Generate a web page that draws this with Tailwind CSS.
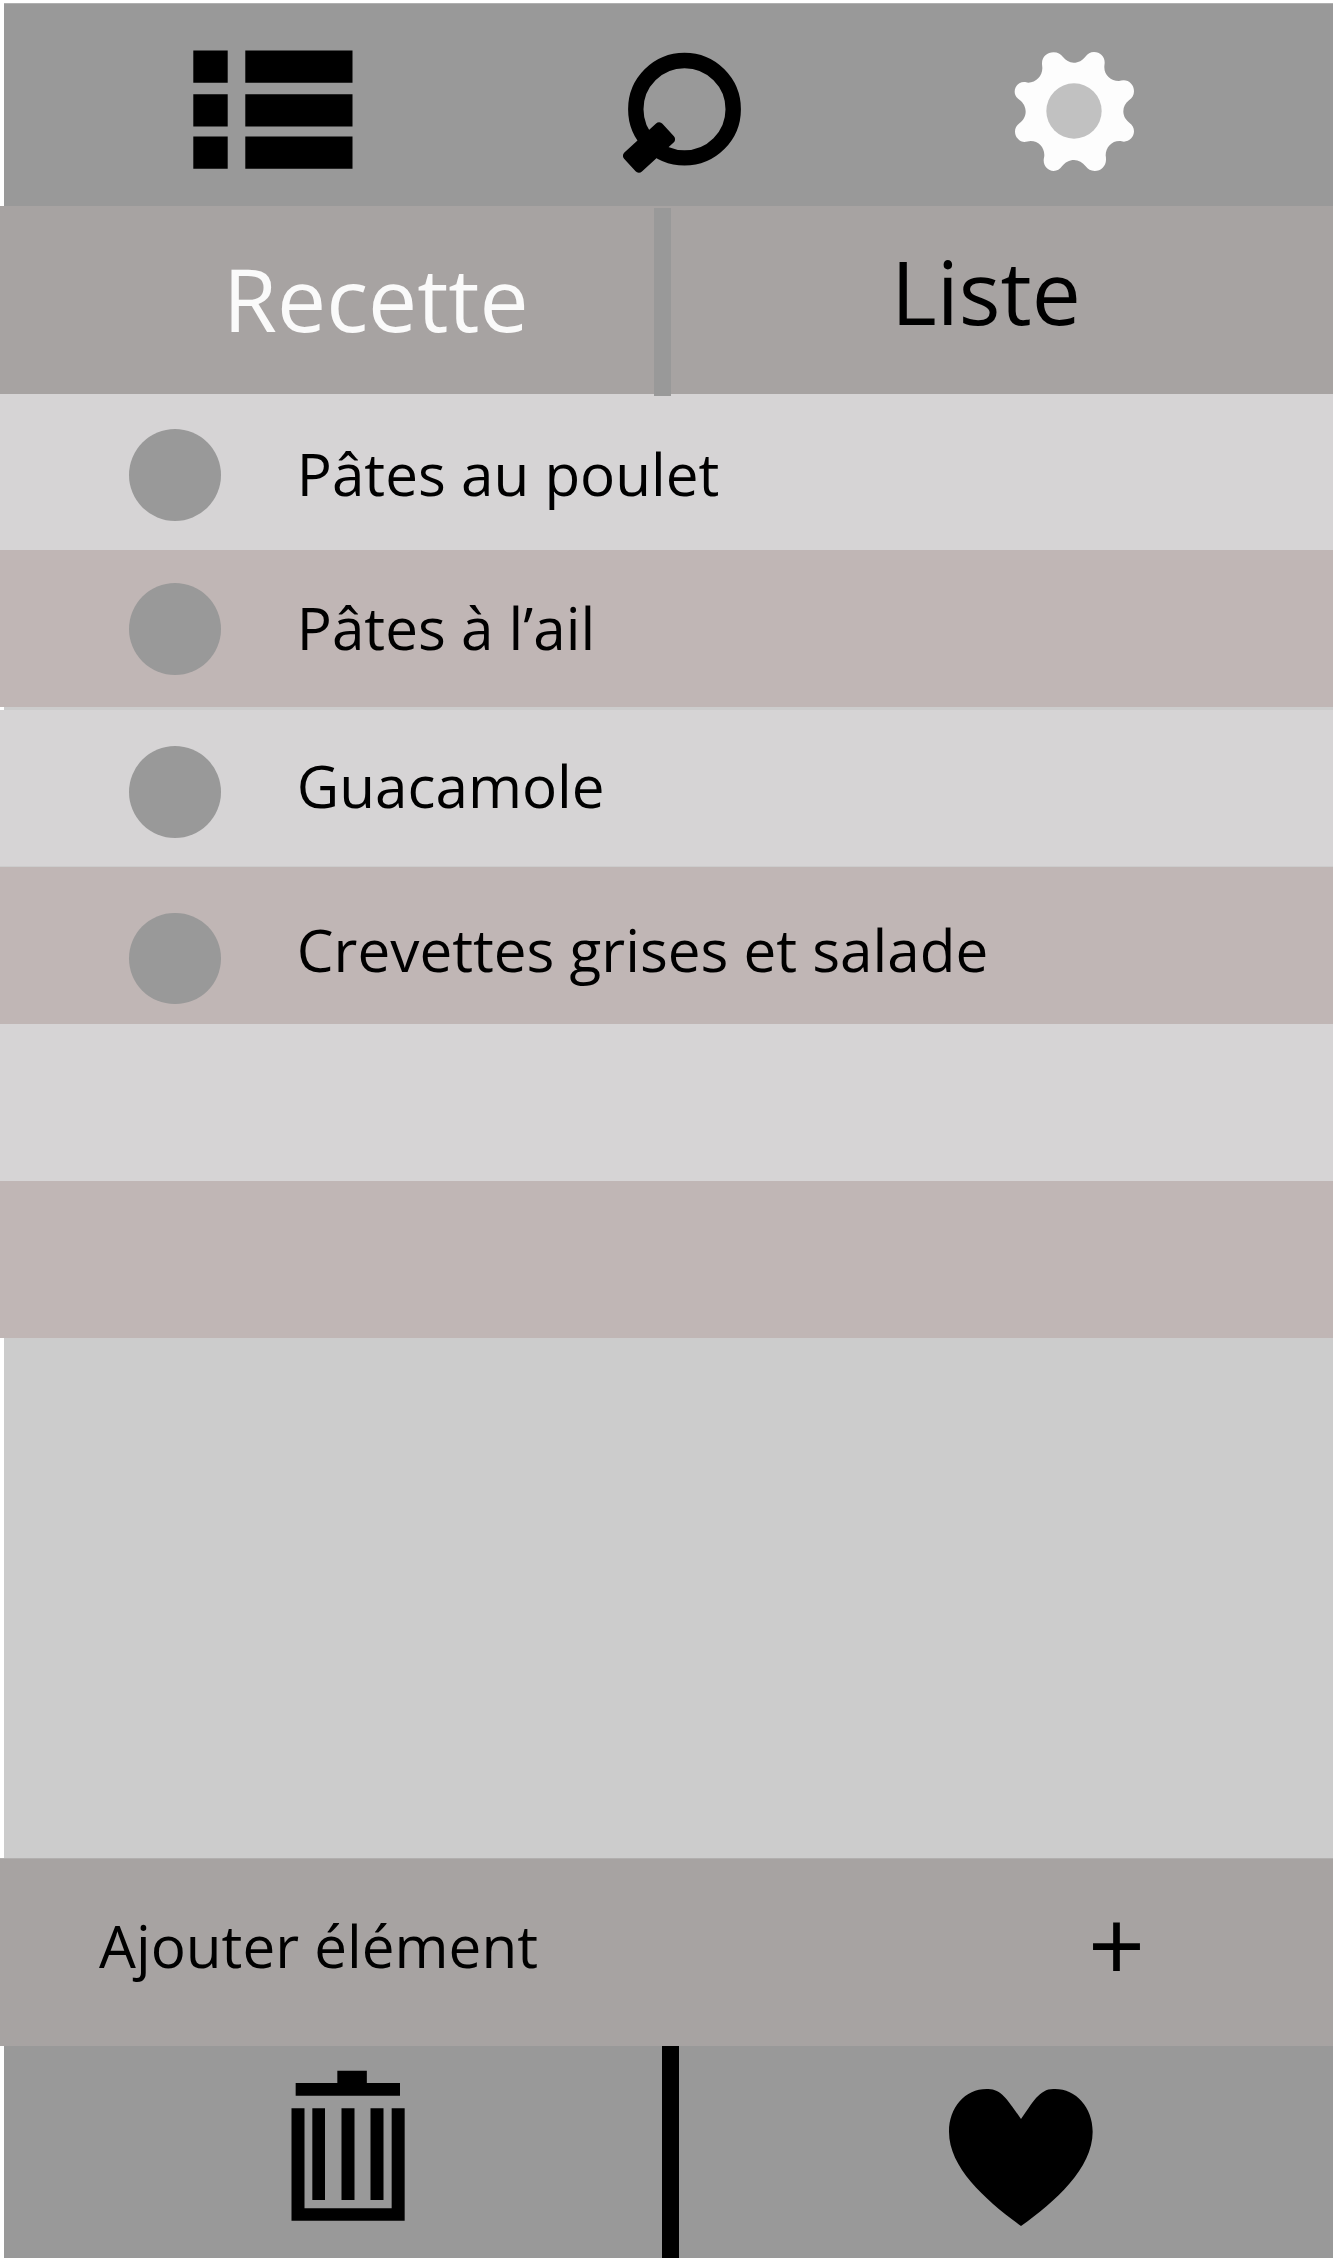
<!DOCTYPE html>
<html lang="fr">
<head>
<meta charset="utf-8">
<title>Recettes</title>
<script src="https://cdn.jsdelivr.net/npm/@tailwindcss/browser@4"></script>
</head>
<body class="w-[1333px] h-[2258px] bg-white font-['Open_Sans',sans-serif] text-[58.4px] leading-[60px] text-black overflow-hidden">
<div class="flex flex-col h-[2258px]">
  <header class="mt-[3px] ml-1 h-[203px] shrink-0 bg-[#999999] border-t border-[#b0b0b0] flex items-start">
    <svg class="ml-[188px] mt-[45px] w-[162px] h-[122px]" viewBox="192 49 162 122">
      <path d="M193.3 50.5h34.4v32.2h-34.4zM193.3 94.3h34.4v32.2h-34.4zM193.3 136.5h34.4v32.2h-34.4zM245.3 50.5h107.2v32.2H245.3zM245.3 94.3h107.2v32.2H245.3zM245.3 136.5h107.2v32.2H245.3z"/>
    </svg>
    <svg class="ml-[246px] mt-[26px] w-[170px] h-[170px]" viewBox="600 30 170 170">
      <circle cx="684.5" cy="109.2" r="48.7" fill="none" stroke="#000" stroke-width="15.4"/>
      <rect x="623" y="134.5" width="52" height="26" rx="4.5" transform="rotate(-42.5 649 147.5)"/>
    </svg>
    <svg class="ml-[220px] mt-[26px] w-[170px] h-[170px]" viewBox="0 0 510 510">
      <path fill="#fdfdfd" d="M156 100C156 80 172 67 191 67C203 67 212 72 219 81C227 91 238 98 251 98C266 98 277 91 286 80C293 71 301 66 312 66C330 66 344 79 344 97C344 103 343 107 343 112C343 136 362 153 387 153C391 152 396 151 401 151C418 151 432 165 432 184C432 196 426 205 417 211C406 219 400 231 400 244C400 258 407 270 418 278C427 285 432 293 432 304C432 321 418 335 402 335C397 335 393 333 388 333C365 333 347 352 347 376C348 381 348 385 348 389C348 408 333 423 314 423C302 423 294 418 287 409C278 397 266 390 252 390C238 390 225 397 216 409C209 418 202 423 191 423C174 423 161 409 161 391C161 386 163 381 163 375C163 351 145 333 122 333C115 333 110 336 103 336C88 336 75 321 75 305C75 294 80 286 89 279C100 271 107 258 107 245C107 231 100 218 89 210C80 203 74 196 74 185C74 169 87 156 102 156C107 156 110 158 115 158C138 158 157 138 157 115C157 110 156 106 156 100Z"/>
      <circle cx="252" cy="243" r="83" fill="#c1c1c1"/>
    </svg>
  </header>

  <nav class="h-[188px] shrink-0 bg-[#a7a3a2] flex items-start text-[87.5px] leading-[100px]">
    <div class="w-[654px] pl-[223px] pt-[42px] text-[#fafafa]">Recette</div>
    <div class="w-[17px] mt-[2px] h-[188px] bg-[#999999] shrink-0 relative z-10"></div>
    <div class="pl-[220px] pt-[35px]">Liste</div>
  </nav>

  <ul class="shrink-0">
    <li class="h-[156px] bg-[#d6d4d5] flex items-start pl-[129.3px]">
      <span class="mt-[35.2px] size-[91.5px] rounded-full bg-[#999999]"></span>
      <span class="ml-[76px] mt-[50px]">Pâtes au poulet</span>
    </li>
    <li class="h-[157px] bg-[#c0b6b5] flex items-start pl-[129.3px]">
      <span class="mt-[33.3px] size-[91.5px] rounded-full bg-[#999999]"></span>
      <span class="ml-[76px] mt-[48px]">Pâtes à l’ail</span>
    </li>
    <li class="ml-1 h-[3px] bg-[#cccccc]"></li>
    <li class="h-[157px] bg-[#d6d4d5] border-b border-[#cccccc] flex items-start pl-[129.3px]">
      <span class="mt-[36.2px] size-[91.5px] rounded-full bg-[#999999]"></span>
      <span class="ml-[76px] mt-[46px]">Guacamole</span>
    </li>
    <li class="h-[157px] bg-[#c0b6b5] flex items-start pl-[129.3px]">
      <span class="mt-[45.8px] size-[91.5px] rounded-full bg-[#999999]"></span>
      <span class="ml-[76px] mt-[53px]">Crevettes grises et salade</span>
    </li>
    <li class="h-[157px] bg-[#d6d4d5]"></li>
    <li class="h-[157px] bg-[#c0b6b5]"></li>
  </ul>

  <div class="ml-1 flex-1 bg-[#cccccc]"></div>

  <div class="h-[188px] shrink-0 bg-[#a7a3a2] border-t border-[#b1afae] flex items-start">
    <span class="ml-[99px] mt-[57px] w-[989px]">Ajouter élément</span>
    <span class="mt-[54px] text-[100px]">+</span>
  </div>

  <footer class="ml-1 h-[212px] shrink-0 bg-[#999999] flex items-start">
    <div class="w-[658px] pl-[266px]">
      <svg class="-mt-[6px] w-[160px] h-[218px]" viewBox="0 0 480 654">
        <path d="M202 92h88.500v37H390v38H77v-38h125zM127 204.500h38v275.500h-38zM214.500 204.500h39v275.500h-39zM301.500 204.500h39v275.500h-39zM64.500 204.500H103.500V505H365V204.500H404V542.500H64.500z"/>
      </svg>
    </div>
    <div class="w-[17px] h-[212px] bg-black"></div>
    <svg class="ml-[241px] mt-[14px] w-[200px] h-[190px]" viewBox="0 0 600 570">
      <path d="M303 177C268 128 246 87 205 87C138 84 87 140 87 215C87 325 200 422 303 498C405 425 518 325 518 215C518 140 465 84 400 87C358 87 338 128 303 177Z"/>
    </svg>
  </footer>
</div>
</body>
</html>
